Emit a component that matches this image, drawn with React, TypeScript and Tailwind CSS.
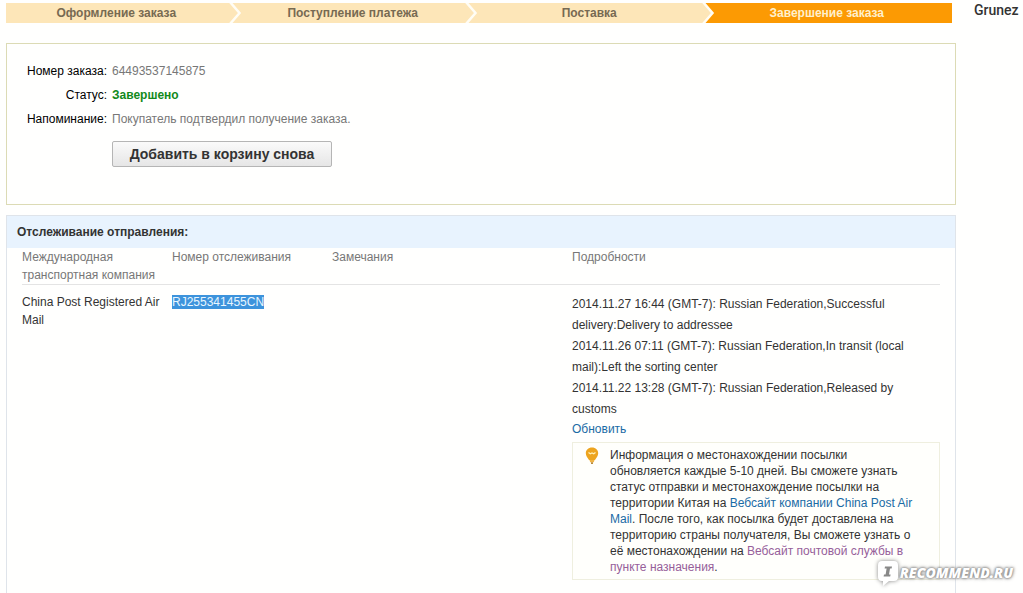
const steps = ['Оформление заказа', 'Поступление платежа', 'Поставка', 'Завершение заказа']

const events = [
  ['2014.11.27 16:44 (GMT-7): Russian Federation,Successful', 'delivery:Delivery to addressee'],
  ['2014.11.26 07:11 (GMT-7): Russian Federation,In transit (local', 'mail):Left the sorting center'],
  ['2014.11.22 13:28 (GMT-7): Russian Federation,Released by', 'customs'],
]

function Steps() {
  return (
    <ol className="mr-1 flex h-5 text-xs font-bold leading-5">
      {steps.map((step, i) => {
        const last = i === steps.length - 1
        const beforeLast = i === steps.length - 2
        return (
          <li
            key={step}
            className={
              last
                ? 'flex flex-1 bg-[#fc9a03] text-[#fff0cc]'
                : 'flex flex-1 bg-[#fde6b8] text-[#776a52]'
            }
          >
            <span className="flex-1 pr-0.5 text-center">{step}</span>
            {last ? (
              <span className="w-3" />
            ) : (
              <svg className="h-5 w-3.5" viewBox="0 0 14 20" aria-hidden="true">
                {beforeLast && <path d="M2 0H14V20H2L11 10Z" fill="#fc9a03" />}
                <path d="M1 -1L10.500 10L1 21" fill="none" stroke="#fffdf5" strokeWidth="2.500" />
              </svg>
            )}
          </li>
        )
      })}
    </ol>
  )
}

function OrderInfo() {
  return (
    <section className="mt-5 border border-[#dcdbb5] px-4 pb-[37px] pt-[15px]">
      <dl className="grid grid-cols-[84px_1fr] gap-x-[5px] whitespace-nowrap leading-6">
        <dt className="text-right text-black">Номер заказа:</dt>
        <dd className="text-[#777]">64493537145875</dd>
        <dt className="text-right text-black">Статус:</dt>
        <dd className="font-bold text-[#128a1c]">Завершено</dd>
        <dt className="text-right text-black">Напоминание:</dt>
        <dd className="text-[#777]">Покупатель подтвердил получение заказа.</dd>
      </dl>
      <button
        type="button"
        className="ml-[89px] mt-2.5 block h-[26px] w-[220px] whitespace-nowrap rounded-xs border border-[#b5b5b5] bg-linear-to-b from-[#fafafa] to-[#e6e6e6] text-sm font-bold text-[#333]"
      >
        Добавить в корзину снова
      </button>
    </section>
  )
}

function Notice() {
  return (
    <div className="mt-1 flex border border-[#efefdf] bg-[#fffffc] pb-1 pl-3 pt-1">
      <svg className="h-[18px] w-[14px] shrink-0" viewBox="0 0 14 18" aria-hidden="true">
        <path
          d="M7 0.500C3.300 0.500 0.800 3 0.800 6.300C0.800 9 2.500 10.500 4 13H10C11.500 10.500 13.200 9 13.200 6.300C13.200 3 10.700 0.500 7 0.500Z"
          fill="#eda41f"
        />
        <path d="M3.500 5.500L5.300 6.800L7 6L8.700 6.800L10.500 5.500" fill="none" stroke="#fff0b8" strokeWidth="1.300" />
        <path d="M4.500 13H9.500L8.800 15.300H5.200Z" fill="#f0b445" />
        <path d="M6 15.300H8V17H6Z" fill="#b98a3a" />
      </svg>
      <p className="ml-[11px] whitespace-nowrap leading-4">
        Информация о местонахождении посылки
        <br />
        обновляется каждые 5-10 дней. Вы сможете узнать
        <br />
        статус отправки и местонахождение посылки на
        <br />
        территории Китая на{' '}
        <a href="#china-post" className="text-[#1a6ba5]">
          Вебсайт компании China Post Air
          <br />
          Mail
        </a>
        . После того, как посылка будет доставлена на
        <br />
        территорию страны получателя, Вы сможете узнать о
        <br />
        её местонахождении на{' '}
        <a href="#local-post" className="text-[#96609a]">
          Вебсайт почтовой службы в
          <br />
          пункте назначения
        </a>
        .
      </p>
    </div>
  )
}

function Tracking() {
  return (
    <section className="mt-2.5 flex-1 border-x border-t border-[#dfe4ea]">
      <h2 className="h-8 bg-[#e8f3fe] pl-2.5 font-bold leading-8 text-[#333]">
        Отслеживание отправления:
      </h2>
      <div className="px-[15px]">
        <table className="w-full table-fixed text-left text-[#333]">
          <colgroup>
            <col className="w-[150px]" />
            <col className="w-[160px]" />
            <col className="w-[240px]" />
            <col />
          </colgroup>
          <thead>
            <tr className="whitespace-nowrap border-b border-[#e4e4e4] align-top leading-[18px] text-[#777]">
              <th className="font-normal">
                Международная
                <br />
                транспортная компания
              </th>
              <th className="font-normal">Номер отслеживания</th>
              <th className="font-normal">Замечания</th>
              <th className="font-normal">Подробности</th>
            </tr>
          </thead>
          <tbody>
            <tr className="whitespace-nowrap align-top leading-[18px]">
              <td className="pt-2">
                China Post Registered Air
                <br />
                Mail
              </td>
              <td className="pt-2">
                <span className="bg-[#3d93dc] text-[#e8f6ff]">RJ255341455CN</span>
              </td>
              <td />
              <td className="pt-[9px]">
                <ul className="leading-[21px]">
                  {events.map(([first, second]) => (
                    <li key={first}>
                      {first}
                      <br />
                      {second}
                    </li>
                  ))}
                </ul>
                <a href="#refresh" className="block text-[#1a6ba5]">
                  Обновить
                </a>
                <Notice />
              </td>
            </tr>
          </tbody>
        </table>
      </div>
    </section>
  )
}

function Watermark() {
  return (
    <div className="absolute bottom-1.5 right-2.5 flex items-center">
      <svg
        className="h-7 w-6 drop-shadow-[0_0_2px_#888888]"
        viewBox="0 0 24 28"
        aria-hidden="true"
      >
        <path
          d="M6 2H18Q22 2 22 6V18Q22 22 18 22H13L7 27V22H6Q2 22 2 18V6Q2 2 6 2Z"
          fill="#fff"
        />
        <path d="M9 7.500H16L15.600 9.500H14L13 15.500H14.600L14.200 17.500H7.600L8 15.500H9.600L10.600 9.500H8.600Z" fill="#888" />
      </svg>
      <span className="font-['Open_Sans',sans-serif] text-sm font-extrabold italic text-white [text-shadow:0_0_2px_#888,0_0_3px_#888,0_0_4px_#999]">
        RECOMMEND.RU
      </span>
    </div>
  )
}

export default function App() {
  return (
    <div className="relative flex min-h-screen bg-[#fffffe] pl-1.5 font-['Liberation_Sans',Arial,sans-serif] text-xs">
      <main className="flex flex-1 flex-col pt-[3px]">
        <Steps />
        <OrderInfo />
        <Tracking />
      </main>
      <aside className="w-[67px] pl-[18px] font-[Roboto,sans-serif] text-sm font-medium text-[#333]">
        Grunez
      </aside>
      <Watermark />
    </div>
  )
}
